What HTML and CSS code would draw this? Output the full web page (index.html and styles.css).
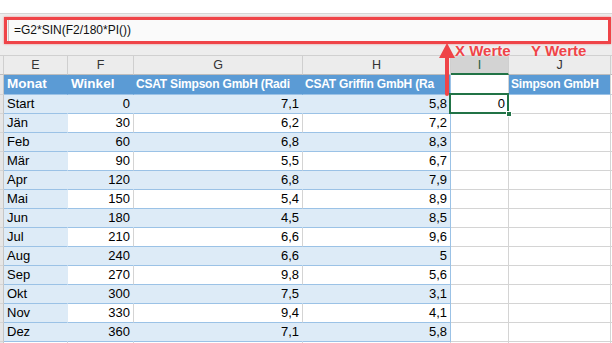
FILE: index.html
```html
<!DOCTYPE html>
<html lang="de">
<head>
  <meta charset="UTF-8" />
  <title>Tabelle | Werte</title>
  <link rel="stylesheet" href="styles.css">
</head>
<body>
  <div class="app">
    <div class="ribbon"></div>
    <div class="formula-area">
      <div class="formula-frame">
        <div class="formula-input">=G2*SIN(F2/180*PI())</div>
      </div>
    </div>

    <div class="sheet">
      <div class="row cols">
        <div class="c stub"></div><div class="c">E</div><div class="c">F</div><div class="c">G</div><div class="c">H</div><div class="c active">I</div><div class="c">J</div><div class="c"></div>
      </div>
      <div class="row thead">
        <div class="c stub"></div><div class="c t">Monat</div><div class="c t">Winkel</div><div class="c t long">CSAT Simpson GmbH (Radi</div><div class="c t long last">CSAT Griffin GmbH (Ra</div><div class="c"></div><div class="c t long j">Simpson GmbH</div><div class="c"></div>
      </div>
      <div class="row band">
        <div class="c stub"></div><div class="c t">Start</div><div class="c t n">0</div><div class="c t n">7,1</div><div class="c t n last">5,8</div><div class="c n selected">0<span class="sel-box"></span><span class="handle"></span></div><div class="c"></div><div class="c"></div>
      </div>
      <div class="row">
        <div class="c stub"></div><div class="c t">Jän</div><div class="c t n">30</div><div class="c t n">6,2</div><div class="c t n last">7,2</div><div class="c"></div><div class="c"></div><div class="c"></div>
      </div>
      <div class="row band">
        <div class="c stub"></div><div class="c t">Feb</div><div class="c t n">60</div><div class="c t n">6,8</div><div class="c t n last">8,3</div><div class="c"></div><div class="c"></div><div class="c"></div>
      </div>
      <div class="row">
        <div class="c stub"></div><div class="c t">Mär</div><div class="c t n">90</div><div class="c t n">5,5</div><div class="c t n last">6,7</div><div class="c"></div><div class="c"></div><div class="c"></div>
      </div>
      <div class="row band">
        <div class="c stub"></div><div class="c t">Apr</div><div class="c t n">120</div><div class="c t n">6,8</div><div class="c t n last">7,9</div><div class="c"></div><div class="c"></div><div class="c"></div>
      </div>
      <div class="row">
        <div class="c stub"></div><div class="c t">Mai</div><div class="c t n">150</div><div class="c t n">5,4</div><div class="c t n last">8,9</div><div class="c"></div><div class="c"></div><div class="c"></div>
      </div>
      <div class="row band">
        <div class="c stub"></div><div class="c t">Jun</div><div class="c t n">180</div><div class="c t n">4,5</div><div class="c t n last">8,5</div><div class="c"></div><div class="c"></div><div class="c"></div>
      </div>
      <div class="row">
        <div class="c stub"></div><div class="c t">Jul</div><div class="c t n">210</div><div class="c t n">6,6</div><div class="c t n last">9,6</div><div class="c"></div><div class="c"></div><div class="c"></div>
      </div>
      <div class="row band">
        <div class="c stub"></div><div class="c t">Aug</div><div class="c t n">240</div><div class="c t n">6,6</div><div class="c t n last">5</div><div class="c"></div><div class="c"></div><div class="c"></div>
      </div>
      <div class="row">
        <div class="c stub"></div><div class="c t">Sep</div><div class="c t n">270</div><div class="c t n">9,8</div><div class="c t n last">5,6</div><div class="c"></div><div class="c"></div><div class="c"></div>
      </div>
      <div class="row band">
        <div class="c stub"></div><div class="c t">Okt</div><div class="c t n">300</div><div class="c t n">7,5</div><div class="c t n last">3,1</div><div class="c"></div><div class="c"></div><div class="c"></div>
      </div>
      <div class="row">
        <div class="c stub"></div><div class="c t">Nov</div><div class="c t n">330</div><div class="c t n">9,4</div><div class="c t n last">4,1</div><div class="c"></div><div class="c"></div><div class="c"></div>
      </div>
      <div class="row band">
        <div class="c stub"></div><div class="c t">Dez</div><div class="c t n">360</div><div class="c t n">7,1</div><div class="c t n last">5,8</div><div class="c"></div><div class="c"></div><div class="c"></div>
      </div>
      <div class="row">
        <div class="c stub"></div><div class="c"></div><div class="c"></div><div class="c"></div><div class="c"></div><div class="c"></div><div class="c"></div><div class="c"></div>
      </div>
    </div>

    <!-- annotation: arrow + labels -->
    <svg class="arrow" width="20" height="60" viewBox="0 0 20 60">
      <rect x="7" y="14" width="4" height="42" rx="2" fill="#ef4448"/>
      <polygon points="9,3 1,18 17,18" fill="#ef4448"/>
    </svg>
    <span class="label label-x">X Werte</span>
    <span class="label label-y">Y Werte</span>
  </div>
</body>
</html>
```

FILE: styles.css
```css
:root{
  --head:#5B9BD5;
  --band:#DDEBF7;
  --line:#9BC2E6;
  --grid:#D4D4D4;
  --green:#217346;
  --red:#EF4448;
}
*{box-sizing:border-box}
body{margin:0;overflow:hidden;background:#fff;font-family:'Liberation Sans',Arial,sans-serif;color:#000}
.app{position:relative;width:612px;height:343px;overflow:hidden}

.ribbon{height:14px;background:#fff;border-bottom:1px solid #d6d6d6}
.formula-area{height:41px;background:#ededed;padding:3px 1px 0 4px}
.formula-frame{height:27px;border:3px solid var(--red);box-shadow:0 0 2px rgba(239,68,72,.6);background:#f3f3f3;padding:0 0 0 1px}
.formula-input{height:21px;background:#fafafa;border-left:1px solid #c8c8c8;padding-left:5px;font-size:12px;line-height:21px;color:#111}

.row{display:grid;grid-template-columns:4px 64px 66px 169px 148px 58px 102px 1fr;height:19px}
.c{border-right:1px solid var(--grid);border-bottom:1px solid var(--grid);padding:0 3px;font-size:13px;line-height:18px;white-space:nowrap;overflow:hidden}
.c.n{text-align:right}
.c.stub{background:#e6e6e6;border-right-color:#c6c6c6;padding:0}

.row.cols{height:20px;border-top:1px solid #d0d0d0}
.row.cols .c{background:#ececec;border-right-color:#cfcfcf;border-bottom-color:#bdbdbd;text-align:center;font-size:12.5px;line-height:18px;color:#333}
.row.cols .c.active{background:#d3d3d3;border-bottom:2px solid var(--green);color:#1d5b3a}

.row.thead{height:20px}
.row.thead .c.t{background:var(--head);border-right-color:var(--head);border-bottom-color:var(--line);color:#fff;font-weight:bold;font-size:13.5px;padding-left:3px}
.row.thead .c.long{font-size:12px;letter-spacing:-0.2px;padding-left:2px}
.row.thead .c.last{border-right-color:var(--line)}
.row.thead .c.j{border-right-color:var(--grid)}

.c.t{border-bottom-color:var(--line)}
.c.t:nth-child(2){background:var(--band);border-right-color:var(--band)}
.band .c.t{background:var(--band);border-right-color:var(--band)}
.c.t.last{border-right-color:var(--line)}

.selected{position:relative;overflow:visible}
.sel-box{position:absolute;left:-2px;top:-2px;right:-1px;bottom:-1px;border:2px solid var(--green)}
.handle{position:absolute;right:-4px;bottom:-4px;width:6px;height:6px;background:var(--green);border:1px solid #fff}

.arrow{position:absolute;left:438px;top:40px}
.label{position:absolute;top:42px;font-size:15px;font-weight:bold;color:var(--red);text-shadow:0 0 2px rgba(255,255,255,.9)}
.label-x{left:455px}
.label-y{left:531px}
```
